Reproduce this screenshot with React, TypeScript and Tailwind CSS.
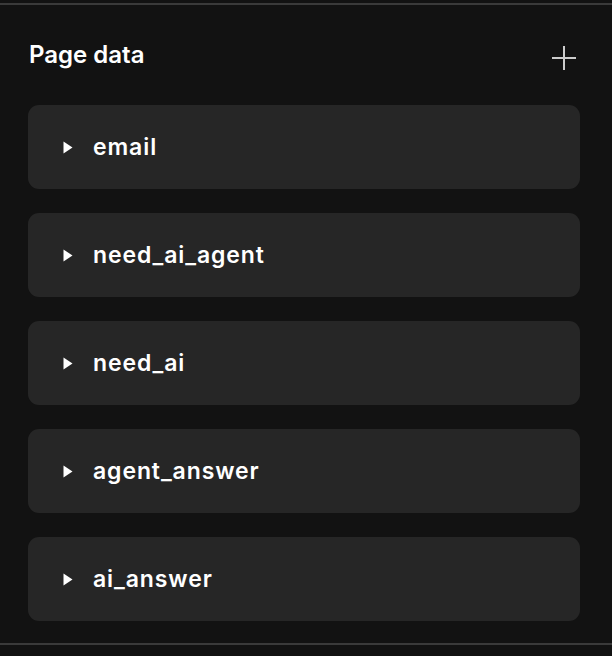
const fields = ["email", "need_ai_agent", "need_ai", "agent_answer", "ai_answer"];

function Caret() {
  return (
    <svg width="10" height="13" viewBox="0 0 10 13" className="shrink-0">
      <path d="M0.5 0.5 L9.5 6.5 L0.5 12.5 Z" fill="#ffffff" />
    </svg>
  );
}

function PlusIcon() {
  return (
    <svg width="26" height="26" viewBox="0 0 26 26" className="shrink-0">
      <path d="M13 1 V25 M1 13 H25" stroke="#cccccc" strokeWidth="2" />
    </svg>
  );
}

export default function App() {
  return (
    <div
      className="h-[656px] w-[612px] bg-[#121212] pt-[3px]"
      style={{ fontFamily: "Inter, 'Noto Sans', sans-serif" }}
    >
      <div className="h-[642px] border-y-2 border-[#3a3a3a] pl-[28px] pr-[32px]">
        <div className="flex h-[100px] items-center justify-between">
          <h2 className="pl-[1px] text-[24px] font-semibold text-white">Page data</h2>
          <div className="mr-[3px] mt-[5px]">
            <PlusIcon />
          </div>
        </div>
        <div className="flex flex-col gap-[24px]">
          {fields.map((f) => (
            <div
              key={f}
              className="flex h-[84px] items-center gap-[20px] rounded-[11px] bg-[#262626] pl-[35px]"
            >
              <Caret />
              <span className="text-[23px] font-semibold tracking-[0.9px] text-white">{f}</span>
            </div>
          ))}
        </div>
      </div>
    </div>
  );
}
